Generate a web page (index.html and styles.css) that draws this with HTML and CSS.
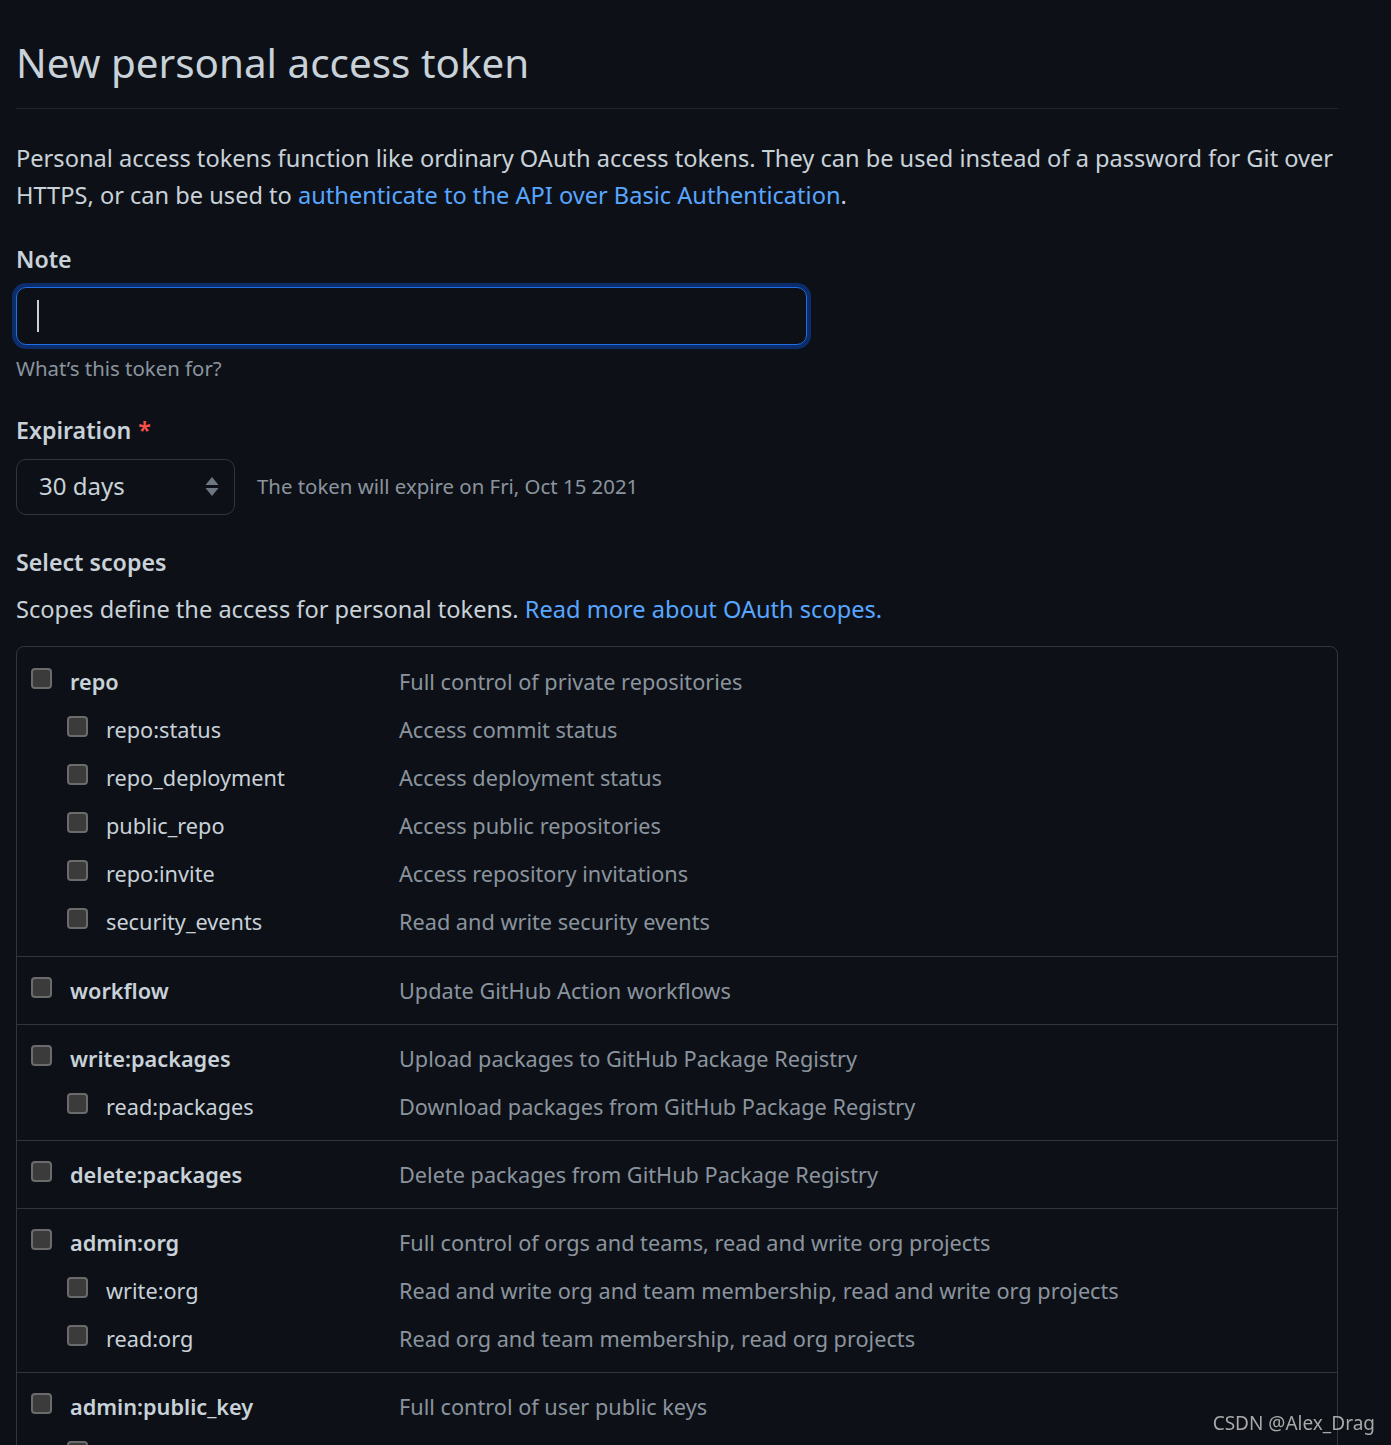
FILE: index.html
```html
<!DOCTYPE html>
<html lang="en">
<head>
    <meta charset="UTF-8">
    <meta name="viewport" content="width=device-width, initial-scale=1.0">
    <title>New personal access token</title>
    <link rel="stylesheet" href="styles.css">
</head>
<body>
    <div class="container">
        <div class="subhead">
            <h2>New personal access token</h2>
        </div>

        <p class="intro">Personal access tokens function like ordinary OAuth access tokens. They can be used instead of a password for Git over HTTPS, or can be used to <a href="#">authenticate to the API over Basic Authentication</a>.</p>

        <form id="token-form">
            <label class="field-label" for="note">Note</label>
            <div class="note-input" id="note"><span class="caret"></span></div>
            <p class="note">What’s this token for?</p>

            <label class="field-label">Expiration <span class="required">*</span></label>
            <div class="expiration">
                <div class="select">
                    <span>30 days</span>
                    <svg width="14" height="20" viewBox="0 0 14 20">
                        <path d="M7 0 L13.5 8 L0.5 8 Z" fill="#6e7681"/>
                        <path d="M7 19 L13.5 11 L0.5 11 Z" fill="#6e7681"/>
                    </svg>
                </div>
                <span class="expire-note">The token will expire on Fri, Oct 15 2021</span>
            </div>

            <h3 class="field-label scopes-title">Select scopes</h3>
            <p class="scopes-intro">Scopes define the access for personal tokens. <a href="#">Read more about OAuth scopes.</a></p>

            <div class="scopes">
                <div class="scope-group">
                    <div class="scope-row top"><div class="scope-label"><span class="check"></span><span>repo</span></div><span class="desc">Full control of private repositories</span></div>
                    <div class="scope-row sub"><div class="scope-label"><span class="check"></span><span>repo:status</span></div><span class="desc">Access commit status</span></div>
                    <div class="scope-row sub"><div class="scope-label"><span class="check"></span><span>repo_deployment</span></div><span class="desc">Access deployment status</span></div>
                    <div class="scope-row sub"><div class="scope-label"><span class="check"></span><span>public_repo</span></div><span class="desc">Access public repositories</span></div>
                    <div class="scope-row sub"><div class="scope-label"><span class="check"></span><span>repo:invite</span></div><span class="desc">Access repository invitations</span></div>
                    <div class="scope-row sub"><div class="scope-label"><span class="check"></span><span>security_events</span></div><span class="desc">Read and write security events</span></div>
                </div>
                <div class="scope-group">
                    <div class="scope-row top"><div class="scope-label"><span class="check"></span><span>workflow</span></div><span class="desc">Update GitHub Action workflows</span></div>
                </div>
                <div class="scope-group">
                    <div class="scope-row top"><div class="scope-label"><span class="check"></span><span>write:packages</span></div><span class="desc">Upload packages to GitHub Package Registry</span></div>
                    <div class="scope-row sub"><div class="scope-label"><span class="check"></span><span>read:packages</span></div><span class="desc">Download packages from GitHub Package Registry</span></div>
                </div>
                <div class="scope-group">
                    <div class="scope-row top"><div class="scope-label"><span class="check"></span><span>delete:packages</span></div><span class="desc">Delete packages from GitHub Package Registry</span></div>
                </div>
                <div class="scope-group">
                    <div class="scope-row top"><div class="scope-label"><span class="check"></span><span>admin:org</span></div><span class="desc">Full control of orgs and teams, read and write org projects</span></div>
                    <div class="scope-row sub"><div class="scope-label"><span class="check"></span><span>write:org</span></div><span class="desc">Read and write org and team membership, read and write org projects</span></div>
                    <div class="scope-row sub"><div class="scope-label"><span class="check"></span><span>read:org</span></div><span class="desc">Read org and team membership, read org projects</span></div>
                </div>
                <div class="scope-group">
                    <div class="scope-row top"><div class="scope-label"><span class="check"></span><span>admin:public_key</span></div><span class="desc">Full control of user public keys</span></div>
                    <div class="scope-row sub"><div class="scope-label"><span class="check"></span><span>write:public_key</span></div><span class="desc">Write user public keys</span></div>
                    <div class="scope-row sub"><div class="scope-label"><span class="check"></span><span>read:public_key</span></div><span class="desc">Read user public keys</span></div>
                </div>
            </div>
        </form>
    </div>

    <div class="watermark">CSDN @Alex_Drag</div>
</body>
</html>
```

FILE: styles.css
```css
body {
    margin: 0;
    background-color: #0d1117;
    color: #c9d1d9;
    font-family: "Noto Sans", "Open Sans", sans-serif;
    font-size: 23.6px;
    line-height: 36.75px;
}

.container {
    width: 1322px;
    padding-left: 16px;
}

a {
    color: #58a6ff;
    text-decoration: none;
}

.subhead {
    padding-top: 30px;
    padding-bottom: 12px;
    border-bottom: 1px solid #21262d;
}

.subhead h2 {
    margin: 0;
    font-size: 40.4px;
    line-height: 66px;
    font-weight: 400;
}

.intro {
    margin: 31px 0 0;
}

.field-label {
    display: block;
    margin-top: 27px;
    font-weight: 600;
    font-size: 23.2px;
}

.required {
    color: #f85149;
    margin-left: 1px;
}

.note-input {
    box-sizing: border-box;
    width: 791px;
    height: 58px;
    margin-top: 10px;
    padding: 12px 20px;
    border: 1px solid #1f6feb;
    border-radius: 10px;
    box-shadow: 0 0 0 4px #0c2d6b;
    display: flex;
    align-items: center;
}

.caret {
    width: 2px;
    height: 32px;
    background: #c9d1d9;
}

.note {
    margin: 8px 0 0;
    color: #8b949e;
    font-size: 20.4px;
    line-height: 31.5px;
}

.expiration {
    display: flex;
    align-items: center;
    gap: 22px;
    margin-top: 10px;
}

.select {
    box-sizing: border-box;
    width: 219px;
    height: 56px;
    padding: 0 15px 0 22px;
    border: 1px solid #30363d;
    border-radius: 10px;
    display: flex;
    align-items: center;
    justify-content: space-between;
    font-size: 24px;
}

.expire-note {
    color: #8b949e;
    font-size: 20.4px;
}

.scopes-title {
    margin: 29px 0 0;
}

.scopes-intro {
    margin: 11px 0 0;
}

.scopes {
    margin-top: 18px;
    border: 1px solid #30363d;
    border-radius: 8px;
    font-size: 21.7px;
}

.scope-group {
    padding: 10px 0 9px;
    border-top: 1px solid #30363d;
}

.scope-group:first-child {
    padding: 11px 0 10px;
    border-top: none;
}

.scope-row {
    display: grid;
    grid-template-columns: 368px 1fr;
    height: 48px;
    align-items: center;
    padding-left: 14px;
}

.scope-label {
    display: flex;
    align-items: center;
    gap: 18px;
}

.scope-row.top .scope-label {
    font-weight: 600;
}

.scope-row.sub .scope-label {
    padding-left: 36px;
}

.check {
    box-sizing: border-box;
    width: 21px;
    height: 21px;
    margin-bottom: 8px;
    background: #3b3b3b;
    border: 2px solid #6b6b6b;
    border-radius: 4px;
}

.desc {
    color: #8b949e;
}

.watermark {
    position: fixed;
    right: 16px;
    bottom: 8px;
    color: #a8a8a8;
    font-family: "Noto Sans", sans-serif;
    font-size: 19px;
    line-height: 28px;
}
```
